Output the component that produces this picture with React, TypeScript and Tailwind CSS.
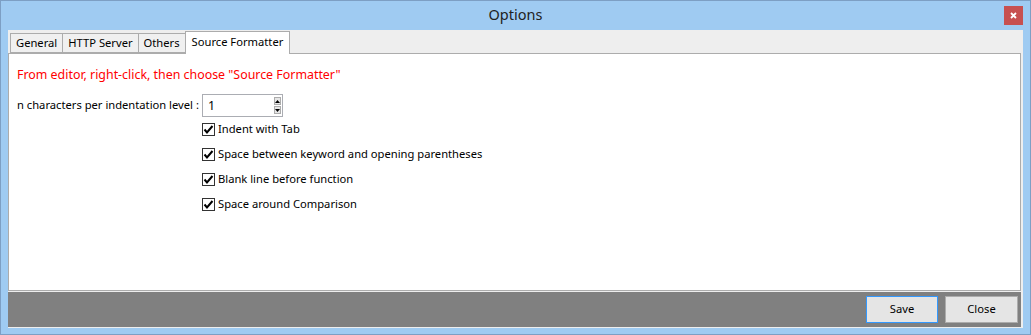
import React from "react";

const OPTIONS = [
  "Indent with Tab",
  "Space between keyword and opening parentheses",
  "Blank line before function",
  "Space around Comparison",
];

const TABS = ["General", "HTTP Server", "Others", "Source Formatter"];

const CheckBox: React.FC = () => (
  <div className="w-[13px] h-[13px] bg-white border border-[#333333] flex items-center justify-center shrink-0">
    <svg width="11" height="11" viewBox="0 0 11 11">
      <path d="M1.5 5.5 L4 8.5 L9.5 2" fill="none" stroke="#000" strokeWidth="2" />
    </svg>
  </div>
);

const App: React.FC = () => {
  return (
    <div className="w-[1031px] h-[335px] bg-[#9fcbf2] border border-[#7d9fc4] flex flex-col font-['Segoe_UI','Noto_Sans',sans-serif] text-[11.2px] text-black">
      {/* title bar */}
      <div className="h-[29px] relative flex items-center justify-center">
        <span className="text-[14.5px] text-[#222] -mt-[1px]">Options</span>
        <div className="absolute right-[7px] top-[5px] w-[19px] h-[19px] bg-[#c75050] flex items-center justify-center">
          <svg width="7" height="7" viewBox="0 0 7 7">
            <path d="M1 1 L6 6 M6 1 L1 6" stroke="#fff" strokeWidth="1.8" />
          </svg>
        </div>
      </div>

      {/* client */}
      <div className="flex-1 mx-[7px] mb-[6px] bg-[#eeeeee] flex flex-col">
        {/* tabs */}
        <div className="h-[23px] pl-[2px] pr-[2px] flex items-end">
          {TABS.map((t, i) => {
            const active = i === TABS.length - 1;
            return active ? (
              <div
                key={t}
                className="h-[23px] -mb-[1px] px-[6px] bg-white border border-b-0 border-[#acacac] flex items-start pt-[2px] relative z-10 whitespace-nowrap"
              >
                {t}
              </div>
            ) : (
              <div
                key={t}
                className="h-[20px] px-[5px] bg-[#f0f0f0] border border-[#acacac] border-r-0 flex items-center whitespace-nowrap"
              >
                {t}
              </div>
            );
          })}
        </div>

        {/* page */}
        <div className="h-[238px] mr-[2px] bg-white border border-[#acacac] pl-[8px] pt-[12px]">
          <div className="text-[#ff0000] text-[12.4px] h-[18px] leading-[18px]">
            From editor, right-click, then choose "Source Formatter"
          </div>
          <div className="flex items-center mt-[10px]">
            <span className="w-[185px] whitespace-nowrap">n characters per indentation level :</span>
            <div className="w-[81px] h-[23px] border border-[#abadb3] flex items-center justify-between pl-[5px] pr-[1px]">
              <span className="text-[12.4px] pt-[2px]">1</span>
              <div className="flex flex-col gap-[1px]">
                <div className="w-[7px] h-[8px] bg-[#e6e6e6] border border-[#acacac] flex items-center justify-center">
                  <svg width="5" height="3" viewBox="0 0 5 3">
                    <path d="M0 3 L2.5 0 L5 3 Z" fill="#000" />
                  </svg>
                </div>
                <div className="w-[7px] h-[8px] bg-[#e6e6e6] border border-[#acacac] flex items-center justify-center">
                  <svg width="5" height="3" viewBox="0 0 5 3">
                    <path d="M0 0 L2.5 3 L5 0 Z" fill="#000" />
                  </svg>
                </div>
              </div>
            </div>
          </div>
          <div className="ml-[185px] mt-[4px] flex flex-col gap-[9px]">
            {OPTIONS.map((o) => (
              <div key={o} className="flex items-center h-[16px] gap-[3px]">
                <CheckBox />
                <span className="whitespace-nowrap">{o}</span>
              </div>
            ))}
          </div>
        </div>

        {/* button bar */}
        <div className="flex-1 border-t border-[#eeeeee] mr-[2px]">
          <div className="h-full bg-[#808080] border-b border-[#eeeeee] flex items-center justify-end gap-[7px] pr-[3px]">
            <button className="w-[72px] h-[27px] bg-[#e5e5e5] border border-[#3399ff] text-[11.2px]">
              Save
            </button>
            <button className="w-[73px] h-[27px] bg-[#e5e5e5] border border-[#acacac] text-[11.2px]">
              Close
            </button>
          </div>
        </div>
      </div>
    </div>
  );
};

export default App;
